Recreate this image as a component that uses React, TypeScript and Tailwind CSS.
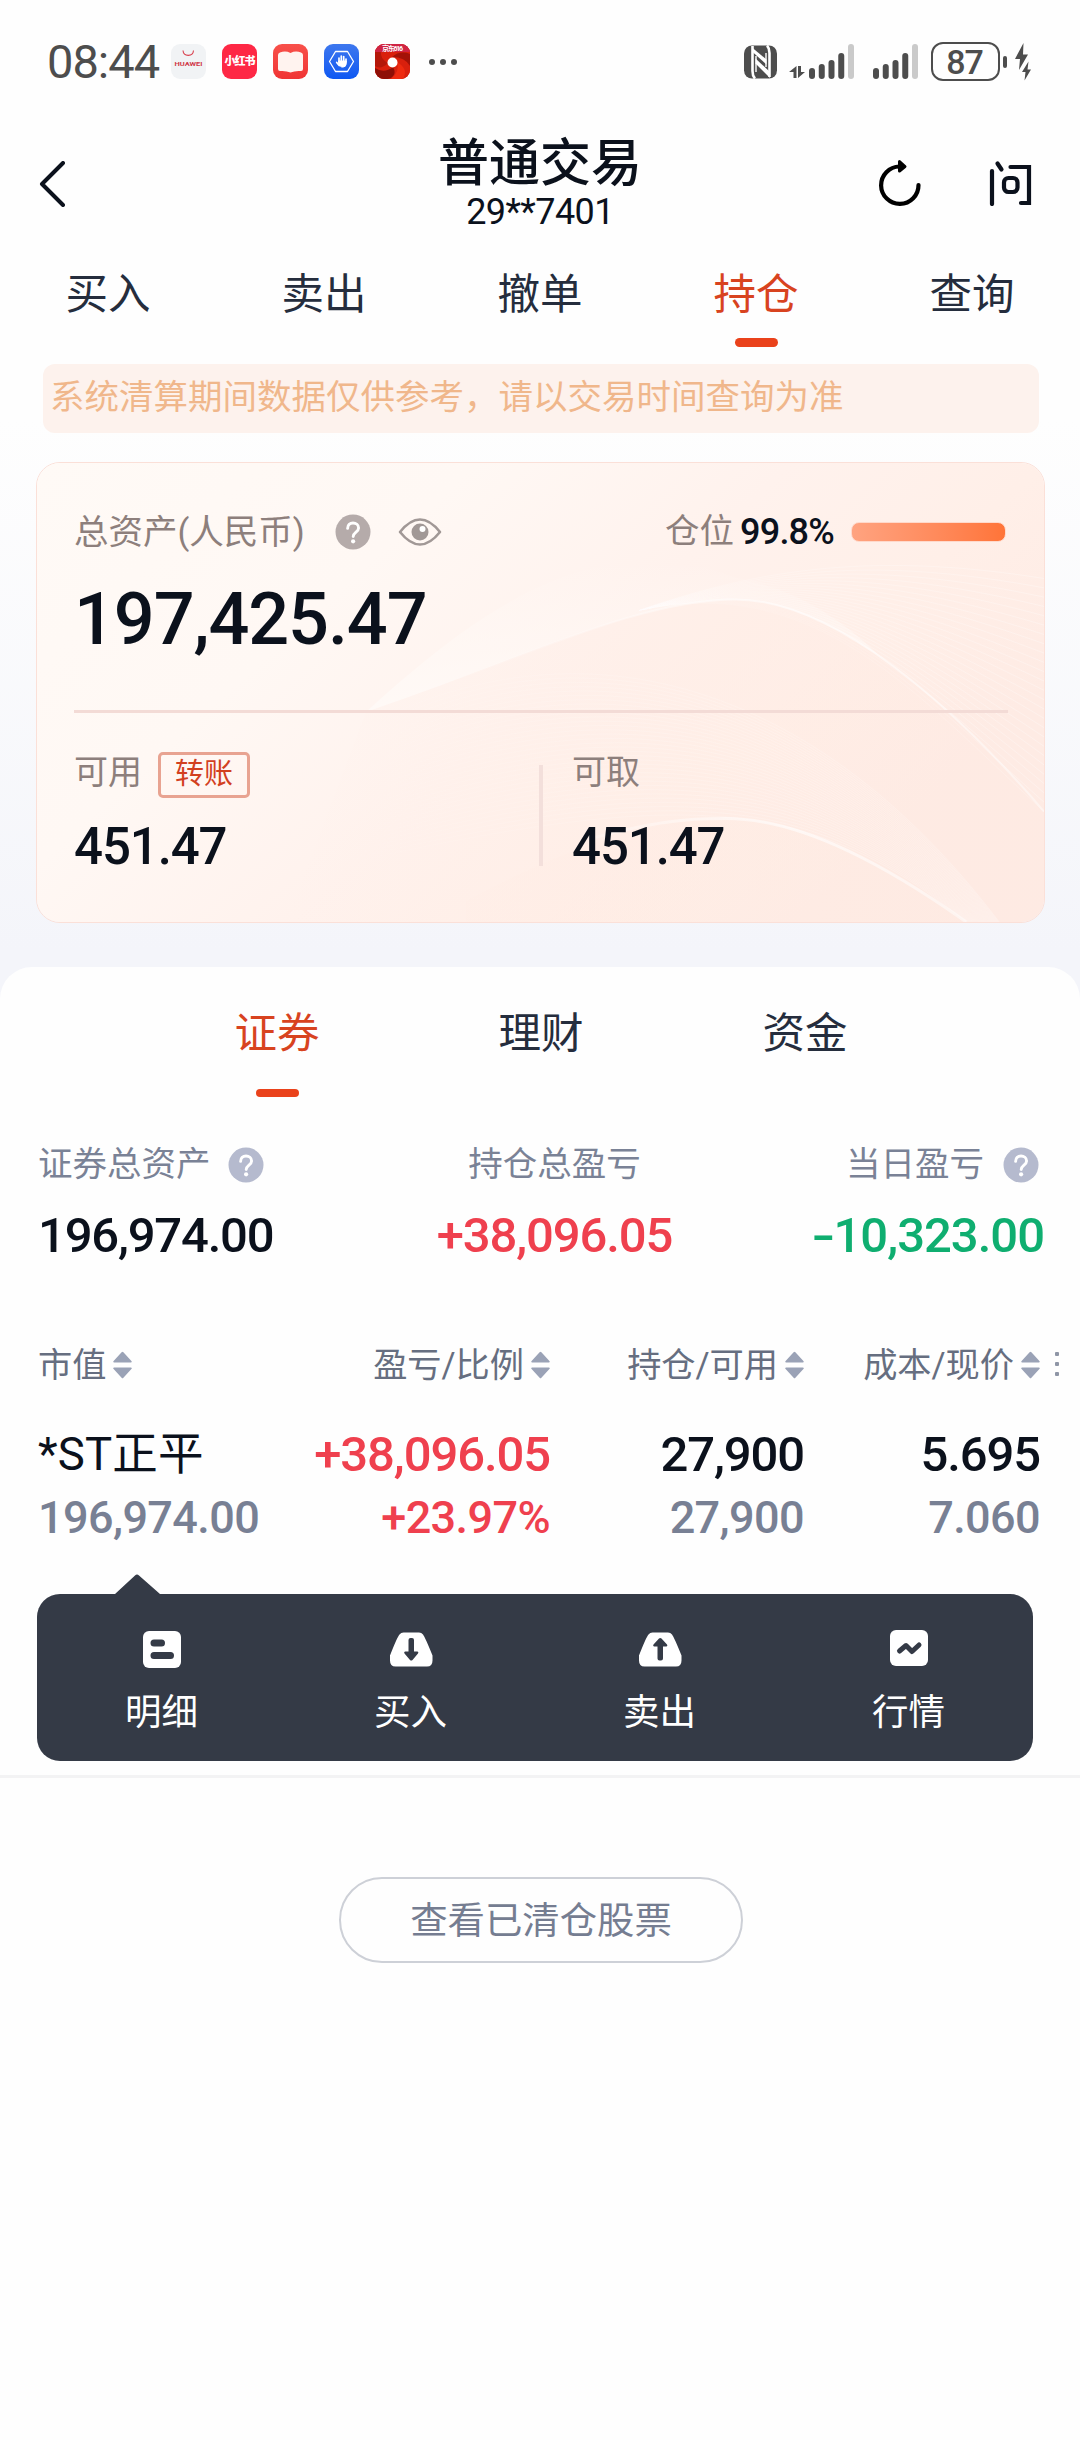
import type { ReactNode } from "react"

const TABS = ["买入", "卖出", "撤单", "持仓", "查询"]
const ASSET_TABS = ["证券", "理财", "资金"]

const COLUMNS = ["市值", "盈亏/比例", "持仓/可用", "成本/现价"]

// evenly spaced lines between two cubic curves, each given as 8 numbers
function blend(a: number[], b: number[], count: number) {
    return Array.from({ length: count }, (_, i) => {
        const t = i / (count - 1)
        const p = a.map((v, k) => (v + (b[k] - v) * t).toFixed(1))
        return `M${p[0]} ${p[1]}C${p[2]} ${p[3]} ${p[4]} ${p[5]} ${p[6]} ${p[7]}`
    })
}

const UPPER_LINES = blend(
    [604, 148, 740, 100, 860, 92, 1010, 116],
    [604, 148, 780, 110, 880, 230, 1010, 350],
    26
)
const MIDDLE_LINES = blend(
    [230, 330, 480, 130, 760, 190, 965, 461],
    [230, 420, 620, 330, 760, 320, 932, 461],
    34
)

function CardWaves() {
    return (
        <svg className="absolute inset-0 h-full w-full" viewBox="0 0 1010 461" preserveAspectRatio="none" fill="none">
            <defs>
                <linearGradient id="base" x1="0" y1="0" x2="1" y2="0.5">
                    <stop offset="0" stopColor="#fffaf6" />
                    <stop offset="0.35" stopColor="#fff8f4" />
                    <stop offset="0.6" stopColor="#fff2ed" />
                    <stop offset="0.8" stopColor="#ffefe8" />
                    <stop offset="1" stopColor="#feebe4" />
                </linearGradient>
                <linearGradient id="hill" gradientUnits="userSpaceOnUse" x1="250" y1="0" x2="1010" y2="0">
                    <stop offset="0" stopColor="#ffece4" stopOpacity="0" />
                    <stop offset="0.6" stopColor="#ffece4" stopOpacity="0.45" />
                    <stop offset="1" stopColor="#fee8e0" stopOpacity="0.3" />
                </linearGradient>
                <linearGradient id="mist" x1="0" y1="0" x2="0" y2="1">
                    <stop offset="0" stopColor="#fffaf7" stopOpacity="0" />
                    <stop offset="1" stopColor="#fffaf7" stopOpacity="0.9" />
                </linearGradient>
                <linearGradient id="glow" gradientUnits="userSpaceOnUse" x1="400" y1="0" x2="1010" y2="0">
                    <stop offset="0" stopColor="#fff" stopOpacity="0" />
                    <stop offset="0.6" stopColor="#fff" stopOpacity="0.6" />
                    <stop offset="1" stopColor="#fff" stopOpacity="0.4" />
                </linearGradient>
                <linearGradient id="lines" gradientUnits="userSpaceOnUse" x1="250" y1="0" x2="1010" y2="0">
                    <stop offset="0" stopColor="#fff" stopOpacity="0" />
                    <stop offset="0.5" stopColor="#fff" stopOpacity="0.16" />
                    <stop offset="1" stopColor="#fff" stopOpacity="0.28" />
                </linearGradient>
            </defs>
            <rect width="1010" height="461" fill="url(#base)" />
            <path d="M330 250C440 150 560 60 700 115Q780 130 844 193C790 155 740 137 700 137C600 137 480 200 330 250z" fill="url(#mist)" />
            {UPPER_LINES.map((d) => (
                <path key={d} d={d} stroke="url(#lines)" />
            ))}
            <path d="M330 250C480 200 600 137 700 137C800 137 920 245 1010 350V461H250Z" fill="url(#hill)" />
            <path d="M330 250C480 200 600 137 700 137C800 137 920 245 1010 350" stroke="url(#glow)" strokeWidth="2" />
            {MIDDLE_LINES.map((d) => (
                <path key={d} d={d} stroke="url(#lines)" />
            ))}
            <path d="M430 440C560 370 640 357 691 357C770 357 860 410 932 461H430Z" fill="url(#hill)" />
            <path d="M560 376C620 360 650 357 691 357C770 357 860 410 932 461" stroke="url(#glow)" strokeWidth="3" />
        </svg>
    )
}

function Help({ className }: { className: string }) {
    return (
        <svg className={className} width="36" height="36" viewBox="0 0 36 36" fill="none">
            <circle cx="18" cy="18" r="17.5" fill="currentColor" />
            <path
                d="M12.6 14.4C12.6 11 15 9 18 9s5.6 2 5.6 4.9c0 4-5.4 4.3-5.4 8.6"
                stroke="#fff"
                strokeWidth="2.9"
                strokeLinecap="round"
            />
            <circle cx="18.1" cy="27.3" r="2.1" fill="#fff" />
        </svg>
    )
}

function SortIcon() {
    return (
        <svg className="-mt-[3px]" width="19" height="28" viewBox="0 0 19 28" fill="#9aa2b6">
            <path d="M8.6 1.2q.9-1 1.8 0L18.4 10q1 1.4-.6 1.4H1.2q-1.6 0-.6-1.4z" />
            <path d="M8.6 26.8q.9 1 1.8 0L18.4 18q1-1.4-.6-1.4H1.2q-1.6 0-.6 1.4z" />
        </svg>
    )
}

function AppIcon({ className, children }: { className: string; children: ReactNode }) {
    return (
        <div className={`flex h-[35px] w-[35px] items-center justify-center overflow-hidden rounded-[9px] ${className}`}>
            {children}
        </div>
    )
}

function Signal() {
    const tops = [67, 63, 59, 52, 43]
    return (
        <svg width="46" height="36" viewBox="0 43 46 36">
            {tops.map((top, i) => (
                <rect
                    key={top}
                    x={i * 9.75}
                    y={top}
                    width="6"
                    height={78 - top}
                    rx="3"
                    fill={i === 4 ? "#cacaca" : "#4d4d4d"}
                />
            ))}
        </svg>
    )
}

function StatusBar() {
    return (
        <div className="flex h-[123px] items-center pl-[47px] text-[#4d4d4d]">
            <div className="w-[124px] text-[47px] leading-[60px] tracking-[-1px]">08:44</div>
            <div className="flex gap-4">
                <AppIcon className="bg-[#f1f3f5]">
                    <svg width="35" height="35" viewBox="0 0 35 35" fill="none">
                        <path d="M12 6.5c.5 6.5 10 6.5 10.5 0" stroke="#d8404e" strokeWidth="1.1" />
                        <text x="17.5" y="22" textAnchor="middle" fontSize="5.6" fontWeight="700" textLength="28" lengthAdjust="spacingAndGlyphs" fill="#d03848">
                            HUAWEI
                        </text>
                    </svg>
                </AppIcon>
                <AppIcon className="bg-[#fe2845]">
                    <span className="text-[11px] leading-none font-black tracking-[-1px] whitespace-nowrap text-white">小红书</span>
                </AppIcon>
                <AppIcon className="bg-linear-to-b from-[#f8504a] to-[#f03434]">
                    <svg width="35" height="35" viewBox="0 0 35 35">
                        <path d="M7 8.5Q12.5 6.5 17.5 9Q22.5 6.5 28 8.5Q30 9 30 11V25Q30 27 28 27Q22 26.5 17.5 28.5Q13 26.5 7 27Q5 27 5 25V11Q5 9 7 8.5z" fill="#fff3ef" />
                    </svg>
                </AppIcon>
                <AppIcon className="bg-linear-to-b from-[#3d77ee] to-[#0b57f2]">
                    <svg width="35" height="35" viewBox="0 0 35 35" fill="none" stroke="#fff" strokeLinecap="round">
                        <path d="M11.5 7.5h12l6 10-6 10h-12l-6-10z" strokeWidth="1.3" strokeLinejoin="round" />
                        <path d="M15 18v-4M17.3 17v-5M19.7 17v-4.5M22 18v-3M12.7 18.5l2.5 3" strokeWidth="1.7" />
                        <path d="M15 17h7.2v3q-.4 3-3 3h-1.5l-2.7-2z" fill="#fff" strokeWidth="1" />
                    </svg>
                </AppIcon>
                <AppIcon className="bg-[#c71c0c]">
                    <svg width="35" height="35" viewBox="0 0 35 35">
                        <rect width="35" height="35" fill="#d9200d" />
                        <path d="M17 13Q25 6 35 10V22Q30 13 17 13z" fill="#a31208" />
                        <path d="M22 18Q25 28 16 35H28Q34 25 22 18z" fill="#ee2b10" />
                        <path d="M18 23Q9 30 0 24V33Q8 37 16 34Q22 30 18 23z" fill="#8e0f06" />
                        <path d="M13 19Q5 15 6 8H0V22Q6 26 13 19z" fill="#b4180a" />
                        <rect width="35" height="8" fill="#cf2444" />
                        <text x="17.5" y="7" textAnchor="middle" fontSize="7" fontWeight="700" textLength="21" fill="#fff">
                            京东616
                        </text>
                        <circle cx="17.5" cy="18.5" r="5" fill="#fff" />
                    </svg>
                </AppIcon>
            </div>
            <svg className="ml-[19px]" width="28" height="8" viewBox="0 0 28 8" fill="#4d4d4d">
                <circle cx="3" cy="4" r="3" />
                <circle cx="14" cy="4" r="3" />
                <circle cx="25" cy="4" r="3" />
            </svg>
            <svg className="ml-[287px]" width="33" height="34" viewBox="0 0 33 34">
                <rect y="0.5" width="33" height="33" rx="8" fill="#4d4d4d" />
                {/* N mark: left and right strokes, then the diagonal band */}
                <path d="M8.5 1V26Q8.5 31 11 33.5" stroke="#fff" strokeWidth="2.6" fill="none" />
                <path d="M23 .5Q25.5 3 25.5 8V32" stroke="#fff" strokeWidth="2.6" fill="none" />
                <path d="M8 2.5L22.5 14.5V19.5L8 6.5z" fill="#fff" />
                <path d="M11.5 13.5L26 27V33L11.5 18.5z" fill="#fff" />
                <path d="M12 11v16M22 8v14" stroke="#fff" strokeWidth="1.4" />
            </svg>
            <svg className="mt-[21px] ml-3" width="16" height="12" viewBox="0 0 16 12" fill="#4d4d4d">
                <path d="M7.5 12V0L0 6h4.5v6zM9 0v12l7-6h-4V0z" />
            </svg>
            <div className="ml-[4px] flex gap-[18px]">
                <Signal />
                <Signal />
            </div>
            <div className="ml-[12px] flex h-[39px] w-[69px] items-center justify-center rounded-[12px] border-[2.5px] border-[#4d4d4d] pr-[2px] text-[34px] leading-none font-medium tracking-[-1px]">
                87
            </div>
            <div className="ml-[3px] h-3 w-[4px] rounded-[2px] bg-[#4d4d4d]" />
            <svg className="ml-2" width="16" height="38" viewBox="0 0 16 38" fill="#4d4d4d">
                <path d="M8.5 0L0 16h5L4 27l9-15.5H8z" />
                <path d="M13.5 18.5L7 29h3.5L9.5 37.5 16 26.5h-3.5z" />
            </svg>
        </div>
    )
}

function Header() {
    return (
        <header className="flex h-[124px] items-center">
            <div className="w-[360px] pb-[3px] pl-[39px]">
                <svg width="27" height="46" viewBox="0 0 27 46" fill="none">
                    <path d="M24 2L3 23l21 21" stroke="#0b111c" strokeWidth="4" strokeLinecap="round" strokeLinejoin="round" />
                </svg>
            </div>
            <div className="w-[360px] pt-px text-center text-[#0b111c]">
                <h1 className="text-[51px] leading-[52px] font-medium">普通交易</h1>
                <div className="text-[36px] leading-[44px] tracking-[-0.6px]">29**7401</div>
            </div>
            <div className="flex w-[360px] items-center pb-[4px] pl-[158px]">
                <svg width="44" height="48" viewBox="0 0 44 48" fill="none" stroke="#000" strokeWidth="4.2" strokeLinecap="round">
                    <path d="M21.5 7.5A18.7 18.7 0 1 0 40.5 26" />
                    <path d="M21.5 2.5l5.5 5-5.5 4.5z" fill="#000" strokeWidth="3" strokeLinejoin="round" />
                </svg>
                <svg className="ml-[67px]" width="44" height="46" viewBox="0 0 44 46" fill="none" stroke="#0b111c" strokeWidth="4.2" strokeLinecap="round">
                    <path d="M3 11v33" />
                    <path d="M8.5 3.5l4 6" />
                    <path d="M21.5 7H40v36h-8" />
                    <rect x="15" y="18" width="13.5" height="14" rx="4.5" />
                </svg>
            </div>
        </header>
    )
}

function AssetCard() {
    return (
        <section className="relative mt-[29px] mr-[35px] ml-[36px] h-[461px] overflow-hidden rounded-[24px] border border-[#fbe0d8]">
            <CardWaves />
            <div className="relative pt-[43px] pr-[36px] pl-[37px]">
                <div className="flex h-[52px] items-center text-[34.5px] text-[#8d7f7c]">
                    <span className="mt-[2px]">总资产(人民币)</span>
                    <Help className="ml-[30px] text-[#b5abaa]" />
                    <svg className="ml-[27px]" width="44" height="28" viewBox="0 0 44 28" fill="none">
                        <path d="M2 14Q12 1.5 22 1.5T42 14Q32 26.5 22 26.5T2 14z" stroke="#a19896" strokeWidth="2.6" strokeLinejoin="round" />
                        <circle cx="22" cy="14" r="8.5" fill="#a19896" />
                        <circle cx="24.5" cy="11" r="3" fill="#fff" />
                    </svg>
                    <span className="ml-auto">仓位</span>
                    <span className="ml-[6px] text-[36px] font-medium tracking-[-0.8px] text-[#0b111c]">99.8%</span>
                    <div className="mr-[2px] ml-[17px] h-5 w-[155px] rounded-[8px] border border-[#ffd9cb] bg-linear-to-r from-[#ffa380] to-[#ff7438]" />
                </div>
                <div className="mt-[22px] h-20 text-[72px] leading-[80px] font-medium tracking-[-1.1px] text-[#0b111c]">197,425.47</div>
                <div className="mt-[50px] h-[3px] bg-[#f3dbd6]" />
                <div className="flex">
                    <div className="w-[465px] pt-[39px]">
                        <div className="flex h-[46px] items-center text-[34px] text-[#8d7f7c]">
                            <span className="mb-[6px]">可用</span>
                            <span className="ml-[16px] flex h-[46px] w-[92px] items-center justify-center rounded-[5px] border-[3px] border-[#e8a391] text-[29px] text-[#d2401f]">
                                转账
                            </span>
                        </div>
                        <div className="mt-[19px] text-[51px] leading-[60px] font-medium tracking-[-1.1px] text-[#0b111c]">451.47</div>
                    </div>
                    <div className="mt-[52px] h-[101px] w-[4px] bg-[#f3dfdb]" />
                    <div className="pt-[39px] pl-[29px]">
                        <div className="flex h-[46px] items-center text-[34px] text-[#8d7f7c]">
                            <span className="mb-[6px]">可取</span>
                        </div>
                        <div className="mt-[19px] text-[51px] leading-[60px] font-medium tracking-[-1.1px] text-[#0b111c]">451.47</div>
                    </div>
                </div>
            </div>
        </section>
    )
}

function Stats() {
    return (
        <div className="mt-[48px] grid grid-cols-[378px_277px_1fr] pr-[36px] pl-[38px] text-[49px] font-medium">
            <div>
                <div className="flex h-10 items-center text-[34.5px] font-normal text-[#7a8296]">
                    证券总资产
                    <Help className="ml-[17px] text-[#b5bace]" />
                </div>
                <div className="mt-[23px] leading-[56px] tracking-[-1.2px] text-[#0b111c]">196,974.00</div>
            </div>
            <div className="flex flex-col items-center">
                <div className="flex h-10 items-center text-[34.5px] font-normal text-[#7a8296]">持仓总盈亏</div>
                <div className="mt-[23px] leading-[56px] tracking-[-1.1px] text-[#ef404e]">+38,096.05</div>
            </div>
            <div className="flex flex-col items-end">
                <div className="flex h-10 items-center pr-[5px] text-[34.5px] font-normal text-[#7a8296]">
                    当日盈亏
                    <Help className="ml-[19px] text-[#b5bace]" />
                </div>
                <div className="mt-[23px] leading-[56px] tracking-[-1px] text-[#0fae70]">
                    <span className="inline-block origin-right scale-x-140">-</span>10,323.00
                </div>
            </div>
        </div>
    )
}

function Holdings() {
    return (
        <div className="mt-[82px] pl-[38px]">
            <div className="flex h-10 items-center text-[34.2px] text-[#666e80]">
                <div className="grid grid-cols-[220px_292px_254px_236px]">
                    {COLUMNS.map((name, i) => (
                        <div key={name} className={`flex items-center gap-[7px] ${i > 0 ? "justify-end" : ""}`}>
                            {name}
                            <SortIcon />
                        </div>
                    ))}
                </div>
                <svg className="-mt-[4px] ml-[15px]" width="5" height="26" viewBox="0 0 5 26" fill="#8f96a6">
                    <rect y="1" width="4" height="4" rx="1" />
                    <rect y="11" width="4" height="4" rx="1" />
                    <rect y="21" width="4" height="4" rx="1" />
                </svg>
            </div>
            <div className="mt-[41px] grid grid-cols-[220px_292px_254px_236px] text-right text-[49px] leading-[56px] font-medium tracking-[-1.1px] text-[#0b111c]">
                <div className="text-left text-[45.5px] font-normal tracking-[0.2px] whitespace-nowrap">*ST正平</div>
                <div className="text-[#ef404e]">+38,096.05</div>
                <div>27,900</div>
                <div>5.695</div>
            </div>
            <div className="mt-[11px] grid grid-cols-[220px_292px_254px_236px] text-right text-[45px] leading-[48px] font-medium tracking-[-0.6px] text-[#788094]">
                <div className="text-left">196,974.00</div>
                <div className="text-[#ef404e]">+23.97%</div>
                <div>27,900</div>
                <div>7.060</div>
            </div>
        </div>
    )
}

// outline shared by the buy and sell icons
const TRAY = "M10.5 2Q12 0 14.5 0H30Q32.5 0 34 2Q36 4.5 43.5 23V28Q43.5 34 38 34H6.5Q1 34 1 28V23Q8 5 10.5 2z"

const ACTIONS = [
    {
        label: "明细",
        icon: (
            <>
                <rect x="3" y="0" width="38" height="37" rx="6" fill="#fff" />
                <path d="M14 12h7.5M14 24.5h16.5" stroke="#343a46" strokeWidth="7" strokeLinecap="round" />
            </>
        ),
    },
    {
        label: "买入",
        icon: (
            <>
                <path d={TRAY} transform="translate(0 1.5)" fill="#fff" />
                <path d="M19.5 9q0-2 2-2h1.5q2 0 2 2v11.5h3.5q1.5.5.5 2l-5.500 6.500q-1.300 1-2.500 0l-5.500-6.500q-1-1.500.5-2h3.500z" fill="#343a46" />
            </>
        ),
    },
    {
        label: "卖出",
        icon: (
            <>
                <path d={TRAY} transform="translate(0 1.5)" fill="#fff" />
                <path d="M19.5 27.5q0 2 2 2h1.5q2 0 2-2v-12h3.5q1.5-.5.5-2l-5.500-6q-1.300-1-2.500 0l-5.500 6q-1 1.500.5 2h3.500z" fill="#343a46" />
            </>
        ),
    },
    {
        label: "行情",
        icon: (
            <>
                <rect x="3" y="-1" width="38" height="36" rx="6" fill="#fff" />
                <path d="M12.5 20l6.5-5.5 6 6 7-6.5" stroke="#343a46" strokeWidth="5" strokeLinecap="round" strokeLinejoin="round" />
            </>
        ),
    },
]

function ActionMenu() {
    return (
        <div className="mt-8 pl-[37px]">
            <svg className="ml-[77px]" width="48" height="20" viewBox="0 0 48 20" fill="#343a46">
                <path d="M1 20L21 1.5Q23 -.5 25 1.5L46 20z" />
            </svg>
            <div className="grid h-[167px] w-[996px] grid-cols-4 rounded-[23px] bg-[#343a46] pt-[36px]">
                {ACTIONS.map(({ label, icon }) => (
                    <div key={label} className="flex flex-col items-center text-[36.5px] leading-[48px] text-white">
                        <svg width="44" height="38" viewBox="0 -1 44 38" fill="none">
                            {icon}
                        </svg>
                        <span className="mt-[21px]">{label}</span>
                    </div>
                ))}
            </div>
        </div>
    )
}

export default function App() {
    return (
        <div className="h-[2440px] w-[1080px] overflow-hidden bg-[linear-gradient(180deg,#fefefe_0px,#fefefe_420px,#f4f5fa_950px)] font-['Roboto','Noto_Sans_CJK_SC',sans-serif]">
            <StatusBar />
            <Header />
            <nav className="grid h-[102px] grid-cols-5 pt-[18px] text-[42.5px] leading-[60px] text-[#252d3d]">
                {TABS.map((tab) => (
                    <div key={tab} className={`flex flex-col items-center ${tab === "持仓" ? "text-[#d8431f]" : ""}`}>
                        {tab}
                        {tab === "持仓" && <div className="mt-[13px] h-[9px] w-[43px] rounded-full bg-[#ea421b]" />}
                    </div>
                ))}
            </nav>
            <div className="mt-[15px] ml-[43px] flex h-[69px] w-[996px] items-center rounded-[12px] bg-[#fdf2ed] pb-[2px] pl-[7px] text-[34.5px] text-[#f0b78b]">
                系统清算期间数据仅供参考，请以交易时间查询为准
            </div>
            <AssetCard />
            <main className="mt-[44px] h-[1473px] rounded-t-[32px] bg-[#fefefe] pt-[37px]">
                <div className="grid grid-cols-[264px_264px_264px] pl-[145px] text-[42.5px] leading-[60px] text-[#252d3d]">
                    {ASSET_TABS.map((tab, i) => (
                        <div key={tab} className={`flex h-[93px] flex-col items-center ${i === 0 ? "text-[#d8431f]" : ""}`}>
                            {tab}
                            {i === 0 && <div className="mt-[25px] h-2 w-[43px] rounded-full bg-[#ea421b]" />}
                        </div>
                    ))}
                </div>
                <Stats />
                <Holdings />
                <ActionMenu />
                <div className="mt-[14px] h-[3px] bg-[#f3f3f4]" />
                <button className="mt-[99px] ml-[339px] flex h-[86px] w-[404px] items-center justify-center rounded-full border-2 border-[#cdd0d7] pt-[2px] text-[37.4px] text-[#757d91]">
                    查看已清仓股票
                </button>
            </main>
        </div>
    )
}
